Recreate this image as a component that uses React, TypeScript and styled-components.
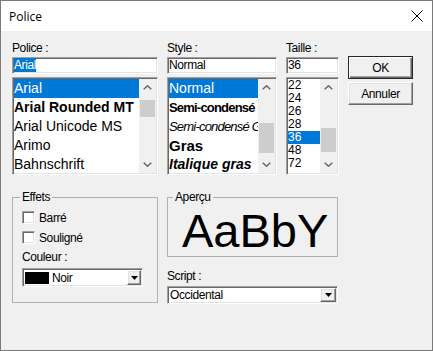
import styled, { createGlobalStyle, css } from 'styled-components';

const GlobalStyle = createGlobalStyle`
  html, body {
    margin: 0;
    padding: 0;
    background: #ffffff;
  }
  body {
    font-family: "Liberation Sans", Arial, sans-serif;
  }
`;

const sunken = css`
  box-sizing: border-box;
  border: 1px solid;
  border-color: #a0a0a0 #ffffff #ffffff #a0a0a0;
  box-shadow: inset 1px 1px #696969, inset -1px -1px #e3e3e3;
  padding: 1px;
  background: #ffffff;
`;

const raised = css`
  box-sizing: border-box;
  border: 1px solid;
  border-color: #ffffff #696969 #696969 #ffffff;
  box-shadow: inset -1px -1px #a0a0a0, inset 1px 1px #e3e3e3;
  background: #f0f0f0;
`;

const Window = styled.div`
  box-sizing: border-box;
  width: 433px;
  height: 351px;
  border: 1px solid #7a7a7a;
  background: #f0f0f0;
  overflow: hidden;
`;

const TitleBar = styled.div`
  height: 30px;
  background: #ffffff;
  display: flex;
  align-items: center;
  justify-content: space-between;
  padding: 0 9px 0 8px;
`;

const Title = styled.span`
  font-family: "Open Sans", "Noto Sans", sans-serif;
  font-size: 12px;
  color: #000000;
`;

const Body = styled.div`
  padding: 10px 0 0 11px;
  font-size: 12px;
  line-height: 14px;
  letter-spacing: -0.4px;
  color: #000000;
`;

const TopRow = styled.div`
  display: grid;
  grid-template-columns: 146px 110px 53px 65px;
  column-gap: 9px;
`;

const Field = styled.div`
  display: flex;
  flex-direction: column;
`;

const Label = styled.div`
  height: 14px;
  white-space: nowrap;
`;

const Edit = styled.div`
  ${sunken};
  height: 17px;
  margin-top: 2px;
  line-height: 13px;
  white-space: nowrap;
  overflow: hidden;
`;

const Selection = styled.span`
  background: #0078d7;
  color: #ffffff;
`;

const ListBox = styled.div`
  ${sunken};
  height: 98px;
  margin-top: 3px;
  display: flex;
`;

const Items = styled.div`
  flex: 1;
  min-width: 0;
  overflow: hidden;
`;

const Item = styled.div<{
  $selected?: boolean;
  $row: number;
  $size: number;
  $bold?: boolean;
  $italic?: boolean;
  $narrow?: boolean;
}>`
  height: ${(p) => p.$row}px;
  line-height: ${(p) => p.$row}px;
  font-size: ${(p) => p.$size}px;
  font-weight: ${(p) => (p.$bold ? 700 : 400)};
  font-style: ${(p) => (p.$italic ? 'italic' : 'normal')};
  letter-spacing: ${(p) => (p.$narrow ? '-0.8px' : '0')};
  white-space: nowrap;
  overflow: hidden;
  background: ${(p) => (p.$selected ? '#0078d7' : 'transparent')};
  color: ${(p) => (p.$selected ? '#ffffff' : '#000000')};
`;

const ScrollBar = styled.div`
  width: 17px;
  flex: none;
  display: flex;
  flex-direction: column;
  background: #f0f0f0;
`;

const ScrollArrow = styled.div`
  height: 17px;
  flex: none;
  display: flex;
  align-items: center;
  justify-content: center;
`;

const Track = styled.div`
  flex: 1;
`;

const Thumb = styled.div<{ $offset: number; $size: number }>`
  margin: ${(p) => p.$offset}px 1px 0;
  height: ${(p) => p.$size}px;
  background: #cdcdcd;
`;

const ButtonStack = styled.div`
  display: flex;
  flex-direction: column;
  gap: 3px;
  padding-top: 15px;
`;

const Button = styled.button<{ $default?: boolean }>`
  ${raised};
  width: 65px;
  height: 23px;
  margin: 0;
  padding: 0;
  font: inherit;
  letter-spacing: inherit;
  color: #000000;
  ${(p) =>
    p.$default &&
    css`
      border-color: #262626;
      box-shadow: inset 1px 1px #ffffff, inset -1px -1px #696969, inset -2px -2px #a0a0a0;
    `}
`;

const BottomRow = styled.div`
  display: grid;
  grid-template-columns: 146px 171px;
  column-gap: 9px;
  margin-top: 15px;
  align-items: start;
`;

const Group = styled.fieldset`
  margin: 0;
  padding: 0;
  min-width: 0;
  border: 1px solid #b0b0b0;
`;

const Legend = styled.legend<{ $inset: number }>`
  padding: 0 2px;
  margin-left: ${(p) => p.$inset}px;
  line-height: 14px;
`;

const EffectsBody = styled.div`
  display: flex;
  flex-direction: column;
  padding: 7px 0 15px 9px;
`;

const CheckRow = styled.label<{ $gapTop?: number }>`
  display: flex;
  align-items: center;
  gap: 4px;
  height: 13px;
  margin-top: ${(p) => p.$gapTop ?? 0}px;
`;

const CheckBox = styled.span`
  ${sunken};
  width: 13px;
  height: 13px;
  flex: none;
`;

const SubLabel = styled.div<{ $gapTop: number }>`
  height: 14px;
  margin-top: ${(p) => p.$gapTop}px;
`;

const Combo = styled.div<{ $w: number; $h: number; $gapTop: number }>`
  ${sunken};
  width: ${(p) => p.$w}px;
  height: ${(p) => p.$h}px;
  margin-top: ${(p) => p.$gapTop}px;
  display: flex;
  align-items: stretch;
`;

const ComboValue = styled.div`
  flex: 1;
  min-width: 0;
  display: flex;
  align-items: center;
  gap: 3px;
  padding-left: 1px;
  white-space: nowrap;
  overflow: hidden;
`;

const Swatch = styled.span`
  width: 24px;
  height: 12px;
  background: #000000;
  flex: none;
`;

const ComboButton = styled.div<{ $w: number }>`
  ${raised};
  width: ${(p) => p.$w}px;
  flex: none;
  display: flex;
  align-items: center;
  justify-content: center;
`;

const RightColumn = styled.div`
  display: flex;
  flex-direction: column;
`;

const PreviewBody = styled.div`
  padding: 3px 9px 2px 4px;
`;

const PreviewClip = styled.div`
  height: 47px;
  overflow: hidden;
  white-space: nowrap;
  padding-left: 10px;
  font-size: 47px;
  line-height: 47px;
  letter-spacing: 0;
`;

const CloseIcon = () => (
  <svg width="12" height="12" viewBox="0 0 12 12">
    <path d="M0.5 0.5 L11.5 11.5 M11.5 0.5 L0.5 11.5" stroke="#000" strokeWidth="1" fill="none" />
  </svg>
);

const Chevron = ({ down }: { down?: boolean }) => (
  <svg width="9" height="5" viewBox="0 0 9 5">
    <path
      d={down ? 'M0.7 0.7 L4.5 4.3 L8.3 0.7' : 'M0.7 4.3 L4.5 0.7 L8.3 4.3'}
      stroke="#606060"
      strokeWidth="1.3"
      fill="none"
    />
  </svg>
);

const DropTriangle = () => (
  <svg width="7" height="4" viewBox="0 0 7 4">
    <path d="M0 0 H7 L3.5 4 Z" fill="#000" />
  </svg>
);

function Scroll({ offset, size }: { offset: number; size: number }) {
  return (
    <ScrollBar>
      <ScrollArrow>
        <Chevron />
      </ScrollArrow>
      <Track>
        <Thumb $offset={offset} $size={size} />
      </Track>
      <ScrollArrow>
        <Chevron down />
      </ScrollArrow>
    </ScrollBar>
  );
}

const fonts = [
  { name: 'Arial' },
  { name: 'Arial Rounded MT', bold: true },
  { name: 'Arial Unicode MS' },
  { name: 'Arimo' },
  { name: 'Bahnschrift' },
];

const styles = [
  { name: 'Normal' },
  { name: 'Semi-condensé Gras', bold: true, narrow: true, size: 13 },
  { name: 'Semi-condensé Gras', italic: true, narrow: true, size: 13 },
  { name: 'Gras', bold: true, size: 15 },
  { name: 'Italique gras', bold: true, italic: true },
];

const sizes = ['22', '24', '26', '28', '36', '48', '72'];

export default function App() {
  return (
    <>
      <GlobalStyle />
      <Window>
        <TitleBar>
          <Title>Police</Title>
          <CloseIcon />
        </TitleBar>
        <Body>
          <TopRow>
            <Field>
              <Label>Police :</Label>
              <Edit>
                <Selection>Arial</Selection>
              </Edit>
              <ListBox>
                <Items>
                  {fonts.map((f) => (
                    <Item key={f.name} $row={19} $size={14} $bold={f.bold} $selected={f.name === 'Arial'}>
                      {f.name}
                    </Item>
                  ))}
                </Items>
                <Scroll offset={4} size={17} />
              </ListBox>
            </Field>

            <Field>
              <Label>Style :</Label>
              <Edit>Normal</Edit>
              <ListBox>
                <Items>
                  {styles.map((s, i) => (
                    <Item
                      key={i}
                      $row={19}
                      $size={s.size ?? 14}
                      $bold={s.bold}
                      $italic={s.italic}
                      $narrow={s.narrow}
                      $selected={i === 0}
                    >
                      {s.name}
                    </Item>
                  ))}
                </Items>
                <Scroll offset={27} size={30} />
              </ListBox>
            </Field>

            <Field>
              <Label>Taille :</Label>
              <Edit>36</Edit>
              <ListBox>
                <Items>
                  {sizes.map((s) => (
                    <Item key={s} $row={13} $size={12} $selected={s === '36'}>
                      {s}
                    </Item>
                  ))}
                </Items>
                <Scroll offset={32} size={24} />
              </ListBox>
            </Field>

            <ButtonStack>
              <Button $default>OK</Button>
              <Button>Annuler</Button>
            </ButtonStack>
          </TopRow>

          <BottomRow>
            <Group>
              <Legend $inset={7}>Effets</Legend>
              <EffectsBody>
                <CheckRow>
                  <CheckBox />
                  Barré
                </CheckRow>
                <CheckRow $gapTop={7}>
                  <CheckBox />
                  Souligné
                </CheckRow>
                <SubLabel $gapTop={6}>Couleur :</SubLabel>
                <Combo $w={121} $h={19} $gapTop={4}>
                  <ComboValue>
                    <Swatch />
                    Noir
                  </ComboValue>
                  <ComboButton $w={14}>
                    <DropTriangle />
                  </ComboButton>
                </Combo>
              </EffectsBody>
            </Group>

            <RightColumn>
              <Group>
                <Legend $inset={5}>Aperçu</Legend>
                <PreviewBody>
                  <PreviewClip>AaBbYyZz</PreviewClip>
                </PreviewBody>
              </Group>
              <SubLabel $gapTop={12}>Script :</SubLabel>
              <Combo $w={171} $h={18} $gapTop={3}>
                <ComboValue>Occidental</ComboValue>
                <ComboButton $w={16}>
                  <DropTriangle />
                </ComboButton>
              </Combo>
            </RightColumn>
          </BottomRow>
        </Body>
      </Window>
    </>
  );
}
